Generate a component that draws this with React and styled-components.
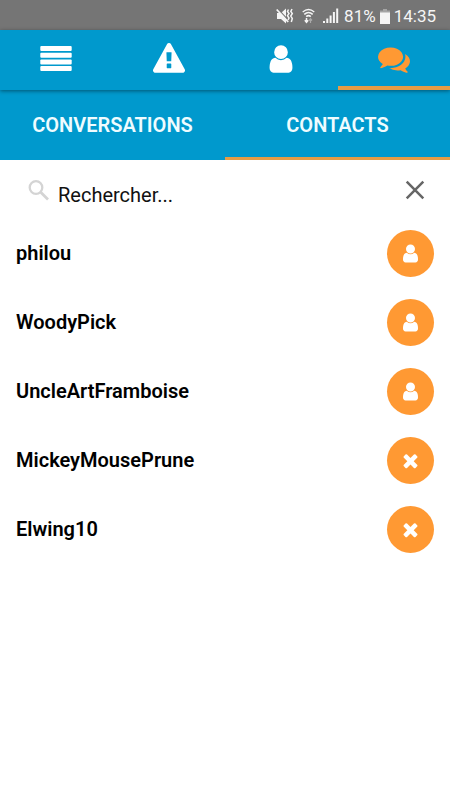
import React, { useState } from "react";
import styled, { createGlobalStyle } from "styled-components";

const BLUE = "#0099cd";
const ORANGE = "#ff9933";

const GlobalStyle = createGlobalStyle`
  *, *::before, *::after { box-sizing: border-box; }
  body {
    margin: 0;
    background: #fff;
    color: #000;
    font-family: Roboto, "Liberation Sans", sans-serif;
  }
  button, input { font: inherit; color: inherit; border: 0; padding: 0; background: none; }
  button { cursor: pointer; }
  svg { display: block; }
`;

const Screen = styled.div`
  min-height: 100vh;
  display: flex;
  flex-direction: column;
`;

const StatusBar = styled.div`
  height: 30px;
  padding: 2px 14px 0 0;
  display: flex;
  align-items: center;
  justify-content: flex-end;
  gap: 4px;
  background: #757575;
  color: #f5f5f5;
  font-size: 17px;
  line-height: 24px;
`;

const StatusIcons = styled.div`
  display: flex;
  align-items: center;
  gap: 8px;
  margin-right: 1px;
`;

const NavBar = styled.nav`
  position: relative;
  height: 60px;
  display: grid;
  grid-template-columns: repeat(4, 1fr);
  background: ${BLUE};
  box-shadow: 0 1px 4px rgba(0, 0, 0, 0.45);
`;

const NavButton = styled.button`
  display: flex;
  align-items: center;
  justify-content: center;
  padding-top: 2px;
  color: ${(p) => (p.$active ? ORANGE : "#fff")};
  border-bottom: 4px solid ${(p) => (p.$active ? "#e69c45" : "transparent")};
`;

const TabBar = styled.div`
  height: 70px;
  display: grid;
  grid-template-columns: 1fr 1fr;
  background: ${BLUE};
`;

const Tab = styled.button`
  color: #effcff;
  font-size: 20px;
  font-weight: 600;
  line-height: 24px;
  text-transform: uppercase;
  border-top: 3px solid transparent;
  border-bottom: 3px solid ${(p) => (p.$active ? "#e69c45" : "transparent")};
`;

const SearchRow = styled.form`
  height: 59px;
  padding: 0 25px 0 28px;
  display: flex;
  align-items: center;
  gap: 8px;
`;

const SearchField = styled.input`
  flex: 1;
  min-width: 0;
  height: 59px;
  padding-top: 11px;
  font-size: 20px;
  outline: none;
  &::placeholder { color: #111; opacity: 1; }
`;

const ClearButton = styled.button`
  color: #666;
`;

const ContactList = styled.ul`
  list-style: none;
  margin: 0;
  padding: 0;
`;

const ContactRow = styled.li`
  height: 69px;
  padding: 0 16px;
  display: flex;
  align-items: center;
  justify-content: space-between;
`;

const ContactName = styled.span`
  font-size: 20px;
  line-height: 24px;
  font-weight: 600;
  padding-bottom: 2px;
`;

const RoundButton = styled.button`
  width: 47px;
  height: 47px;
  border-radius: 50%;
  display: flex;
  align-items: center;
  justify-content: center;
  background: ${ORANGE};
  color: #fff;
`;

const PATHS = {
  user: "M1536 1399q0 109-62.5 187t-150.5 78h-854q-88 0-150.5-78t-62.5-187q0-85 8.5-160.5t31.5-152 58.5-131 94-89 134.5-34.5q131 128 313 128t313-128q76 0 134.5 34.5t94 89 58.5 131 31.5 152 8.500 160.500zm-256-887q0 159-112.5 271.5t-271.5 112.5-271.5-112.5-112.5-271.5 112.5-271.5 271.5-112.5 271.5 112.5 112.5 271.5z",
  warning:
    "M1024 1375v-190q0-14-9.5-23.5t-22.5-9.5h-192q-13 0-22.5 9.5t-9.5 23.5v190q0 14 9.5 23.5t22.5 9.5h192q13 0 22.5-9.5t9.5-23.5zm-2-374l18-459q0-12-10-19-13-11-24-11h-220q-11 0-24 11-10 7-10 21l17 457q0 10 10 16.5t24 6.5h185q14 0 23.5-6.5t10.5-16.5zm-14-934l768 1408q35 63-2 126-17 29-46.5 46t-63.5 17h-1536q-34 0-63.5-17t-46.5-46q-37-63-2-126l768-1408q17-31 47-49t65-18 65 18 47 49z",
  comments:
    "M1408 768q0 139-94 257t-256.5 186.5-353.5 68.5q-86 0-176-16-124 88-278 128-36 9-86 16h-3q-11 0-20.5-8t-11.5-21q-1-3-1-6.5t.5-6.5 2-6l2.5-5 3.5-5.5 4-5 4.5-5 4-4.5q5-6 23-25t26-29.5 22.5-29 25-38.5 20.5-44q-124-72-195-177t-71-224q0-139 94-257t256.5-186.5 353.5-68.5 353.5 68.5 256.5 186.5 94 257zm384 256q0 120-71 224.5t-195 176.5q10 24 20.5 44t25 38.5 22.5 29 26 29.5 23 25q1 1 4 4.5t4.5 5 4 5 3.5 5.5l2.5 5 2 6 .5 6.5-1 6.5q-3 14-13 22t-22 7q-50-7-86-16-154-40-278-128-90 16-176 16-271 0-472-132 58 4 88 4 161 0 309-45t264-129q125-92 192-212t67-254q0-77-23-152 129 71 204 178t75 230z",
  times:
    "M1490 1322q0 40-28 68l-136 136q-28 28-68 28t-68-28l-294-294-294 294q-28 28-68 28t-68-28l-136-136q-28-28-28-68t28-68l294-294-294-294q-28-28-28-68t28-68l136-136q28-28 68-28t68 28l294 294 294-294q28-28 68-28t68 28l136 136q28 28 28 68t-28 68l-294 294 294 294q28 28 28 68z",
};

const Glyph = ({ name, size }) => (
  <svg width={size} height={size} viewBox="0 0 1792 1792" fill="currentColor" aria-hidden="true">
    <path d={PATHS[name]} />
  </svg>
);

const MenuIcon = () => (
  <svg width="32" height="32" viewBox="0 0 32 32" fill="currentColor" aria-hidden="true">
    {[3, 9.7, 16.4, 23.1].map((y) => (
      <rect key={y} x="0.3" y={y} width="31.4" height="5" rx="1" />
    ))}
  </svg>
);

const MuteIcon = () => (
  <svg width="18" height="18" viewBox="0 0 18 18" aria-hidden="true">
    <path d="M1 6h4l5-4.5v15L5 12H1z" fill="#f5f5f5" />
    <path d="M1.500 1.500 13 14" stroke="#757575" strokeWidth="1.200" />
    <path d="M0.700 2.500 12.200 15" stroke="#f5f5f5" strokeWidth="1.800" />
    <path d="M12.500 2.500l-1 2 1.500 2-1.500 2.200 1.500 2.300-1 2M16 2l-1.200 2.500 1.500 2-1.500 2.500 1.500 2.500-1 3.500" fill="none" stroke="#f5f5f5" strokeWidth="1.500" />
  </svg>
);

const WifiIcon = () => (
  <svg width="13" height="18" viewBox="0 0 13 18" fill="none" stroke="#f5f5f5" aria-hidden="true">
    <path d="M0.700 5Q6.500 0 12.300 5" strokeWidth="1.300" />
    <path d="M2.300 7.300Q6.500 3.700 10.700 7.300" strokeWidth="1.600" />
    <path d="M4.200 9.600Q6.500 7.600 8.800 9.600" strokeWidth="1.600" />
    <path d="M4.500 11v4M2.800 13.300l1.700 2 1.700-2" strokeWidth="1.500" />
    <path d="M8.500 16v-4M7 13.500l1.500-1.800 1.500 1.800" stroke="#aaa" strokeWidth="1.200" />
  </svg>
);

const SignalIcon = () => (
  <svg width="16" height="16" viewBox="0 0 16 16" fill="#f5f5f5" aria-hidden="true">
    <path d="M0 13h2v2H0zM3.300 10.500h2V15h-2zM6.600 7.500h2V15h-2zM9.900 4h2v11h-2z" />
    <path d="M13.200 0.500h2V15h-2z" />
  </svg>
);

const BatteryIcon = () => (
  <svg width="10" height="15" viewBox="0 0 10 15" aria-hidden="true">
    <path d="M3 0h4v1.500h3V4H0V1.500h3z" fill="#a5a5a5" />
    <path d="M0 3.500h10V15H0z" fill="#f5f5f5" />
  </svg>
);

const SearchIcon = () => (
  <svg width="22" height="22" viewBox="0 0 22 22" fill="none" stroke="#d4d4d4" aria-hidden="true">
    <circle cx="8" cy="8.500" r="6.300" strokeWidth="2.300" />
    <path d="M12.700 13.200 20 20.500" strokeWidth="2.700" />
  </svg>
);

const ClearIcon = () => (
  <svg width="20" height="20" viewBox="0 0 20 20" stroke="currentColor" strokeWidth="2.500" aria-hidden="true">
    <path d="M1.700 1.700 18.300 18.300M18.300 1.700 1.700 18.300" />
  </svg>
);

const NAV = [
  { id: "menu", label: "Menu", icon: <MenuIcon /> },
  { id: "alerts", label: "Alertes", icon: <Glyph name="warning" size={32} /> },
  { id: "profile", label: "Profil", icon: <Glyph name="user" size={32} /> },
  { id: "chat", label: "Messages", icon: <Glyph name="comments" size={32} /> },
];

const CONTACTS = [
  { name: "philou", icon: "user", action: "Voir le profil" },
  { name: "WoodyPick", icon: "user", action: "Voir le profil" },
  { name: "UncleArtFramboise", icon: "user", action: "Voir le profil" },
  { name: "MickeyMousePrune", icon: "times", action: "Supprimer" },
  { name: "Elwing10", icon: "times", action: "Supprimer" },
];

export default function App() {
  const [section, setSection] = useState("chat");
  const [tab, setTab] = useState("Contacts");
  const [query, setQuery] = useState("");
  const shown = CONTACTS.filter((c) => c.name.toLowerCase().includes(query.toLowerCase()));

  return (
    <Screen>
      <GlobalStyle />
      <StatusBar>
        <StatusIcons>
          <MuteIcon />
          <WifiIcon />
          <SignalIcon />
        </StatusIcons>
        <span>81%</span>
        <BatteryIcon />
        <span>14:35</span>
      </StatusBar>
      <NavBar>
        {NAV.map((n) => (
          <NavButton key={n.id} type="button" aria-label={n.label} $active={n.id === section} onClick={() => setSection(n.id)}>
            {n.icon}
          </NavButton>
        ))}
      </NavBar>
      <TabBar role="tablist">
        {["Conversations", "Contacts"].map((t) => (
          <Tab key={t} type="button" role="tab" aria-selected={t === tab} $active={t === tab} onClick={() => setTab(t)}>
            {t}
          </Tab>
        ))}
      </TabBar>
      <SearchRow role="search" onSubmit={(e) => e.preventDefault()}>
        <SearchIcon />
        <SearchField
          type="text"
          aria-label="Rechercher"
          placeholder="Rechercher..."
          value={query}
          onChange={(e) => setQuery(e.target.value)}
        />
        <ClearButton type="button" aria-label="Effacer" onClick={() => setQuery("")}>
          <ClearIcon />
        </ClearButton>
      </SearchRow>
      <ContactList>
        {shown.map((c) => (
          <ContactRow key={c.name}>
            <ContactName>{c.name}</ContactName>
            <RoundButton type="button" aria-label={`${c.action} : ${c.name}`}>
              <Glyph name={c.icon} size={21} />
            </RoundButton>
          </ContactRow>
        ))}
      </ContactList>
    </Screen>
  );
}
